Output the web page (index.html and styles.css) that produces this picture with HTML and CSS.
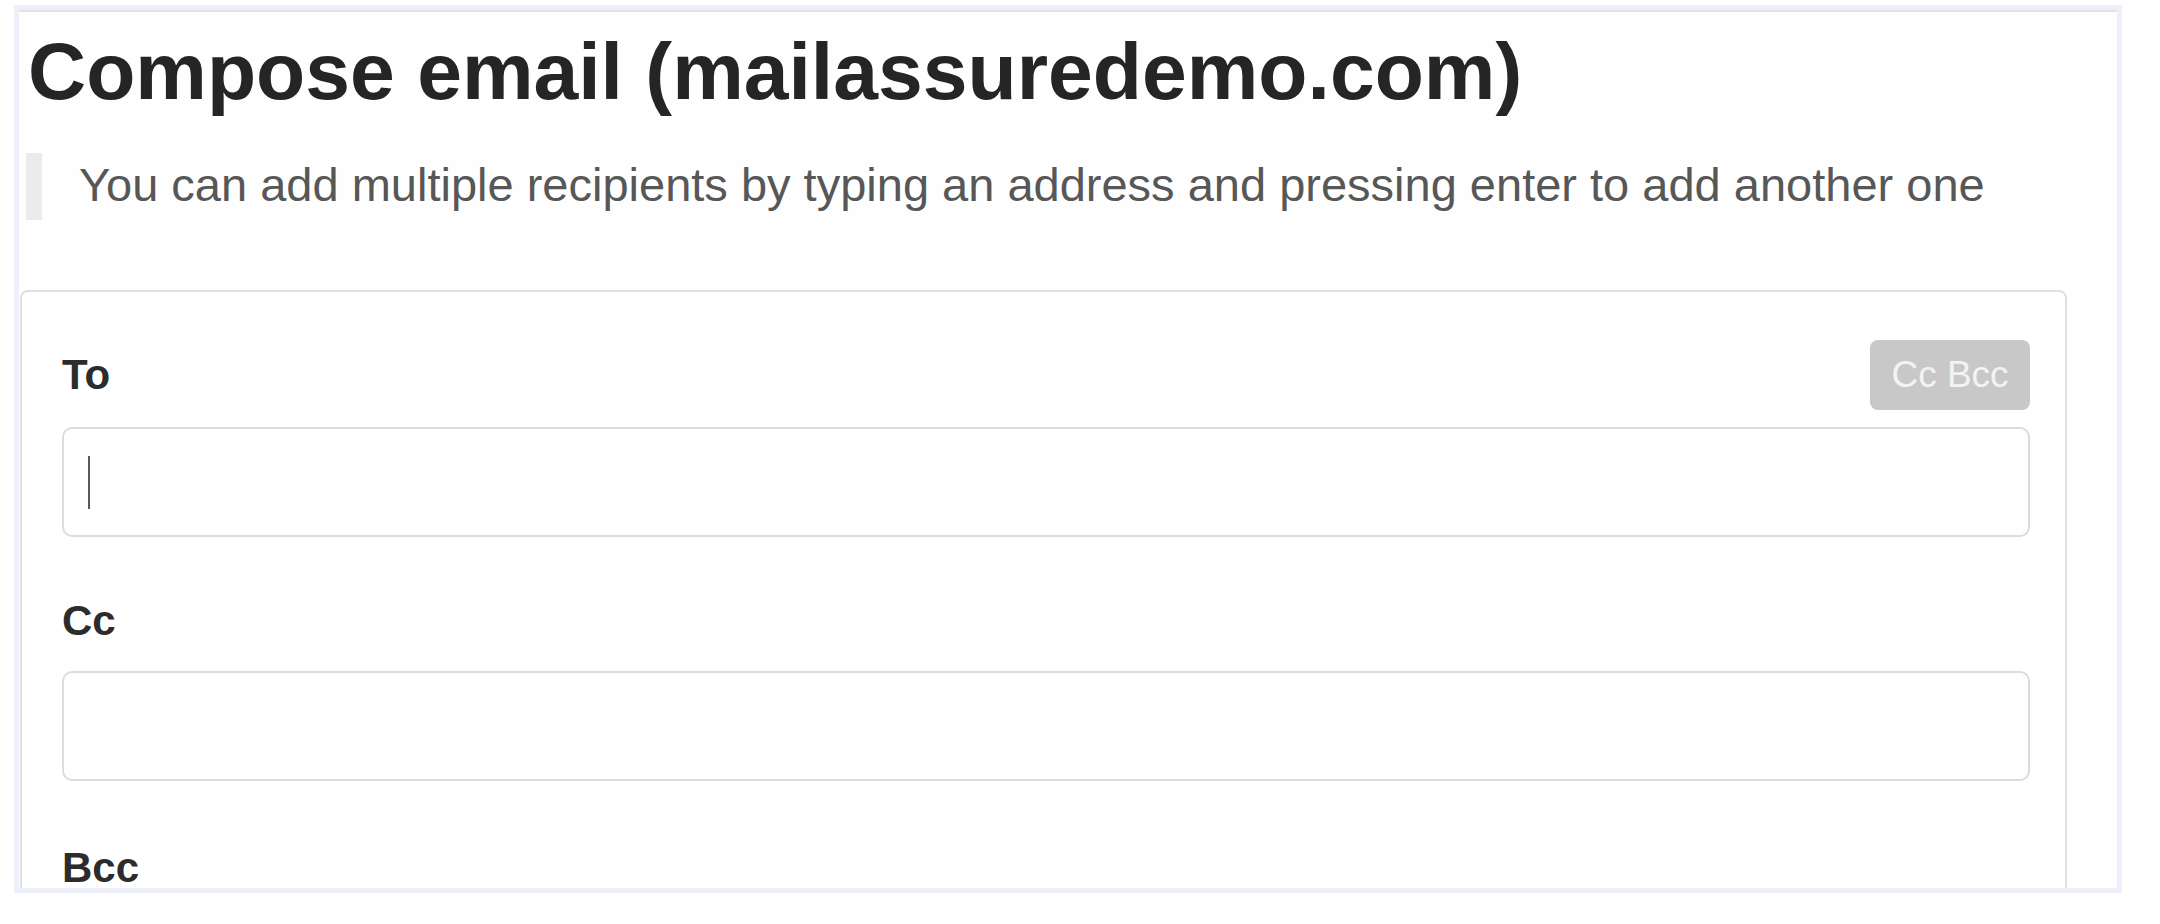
FILE: index.html
```html
<!DOCTYPE html>
<html lang="en">
<head>
<meta charset="utf-8">
<title>Compose email</title>
<link rel="stylesheet" href="styles.css">
</head>
<body>
<div class="frame">
  <div class="page">
    <h1 class="title">Compose email (mailassuredemo.com)</h1>
    <blockquote class="hint">You can add multiple recipients by typing an address and pressing enter to add another one</blockquote>
    <div class="card">
      <div class="to-row">
        <label class="label">To</label>
        <button class="ccbcc" type="button">Cc Bcc</button>
      </div>
      <div class="input first"><span class="caret"></span></div>
      <div class="field">
        <label class="label block">Cc</label>
        <div class="input"></div>
      </div>
      <div class="field last">
        <label class="label block">Bcc</label>
        <div class="input"></div>
      </div>
    </div>
  </div>
</div>
</body>
</html>
```

FILE: styles.css
```css
html, body {
  margin: 0;
  padding: 0;
  background: #ffffff;
}

body {
  font-family: "Liberation Sans", Arial, sans-serif;
}

.frame {
  box-sizing: border-box;
  margin: 5px 0 0 14px;
  width: 2108px;
  height: 888px;
  border: 5px solid #edf0fa;
  overflow: hidden;
  background: #ffffff;
}

.page {
  border-top: 2px solid #e2e2e2;
  background: #fefefe;
  height: 100%;
}

.title {
  margin: 19px 0 0 9px;
  font-size: 80.5px;
  line-height: 80px;
  font-weight: 700;
  color: #252525;
}

.hint {
  margin: 42px 0 0 7px;
  height: 67px;
  box-sizing: border-box;
  border-left: 16px solid #ebebeb;
  padding: 0 0 0 37px;
  font-size: 47px;
  line-height: 64px;
  color: #575757;
}

.card {
  box-sizing: border-box;
  margin: 70px 0 0 1px;
  width: 2047px;
  height: 700px;
  border: 2px solid #e0e0e0;
  border-radius: 8px;
  padding: 48px 35px 0 40px;
  background: #ffffff;
}

.to-row {
  display: flex;
  justify-content: space-between;
  align-items: center;
  height: 70px;
}

.label {
  font-size: 42px;
  font-weight: 700;
  color: #2c2c2c;
}

.label.block {
  display: block;
  line-height: 48px;
  margin-bottom: 26px;
}

.ccbcc {
  width: 160px;
  height: 70px;
  border: none;
  border-radius: 8px;
  background: #c8c8c8;
  color: #f3f3f3;
  font-family: "Liberation Sans", Arial, sans-serif;
  font-size: 37px;
  padding: 0;
}

.input {
  box-sizing: border-box;
  height: 110px;
  border: 2px solid #dcdcdc;
  border-radius: 10px;
  background: #fefefe;
  padding: 0 24px;
  display: flex;
  align-items: center;
}

.input.first {
  margin-top: 17px;
}

.caret {
  display: block;
  width: 2px;
  height: 53px;
  background: #5a5a5a;
}

.field {
  margin-top: 60px;
}

.field.last {
  margin-top: 63px;
}
```
